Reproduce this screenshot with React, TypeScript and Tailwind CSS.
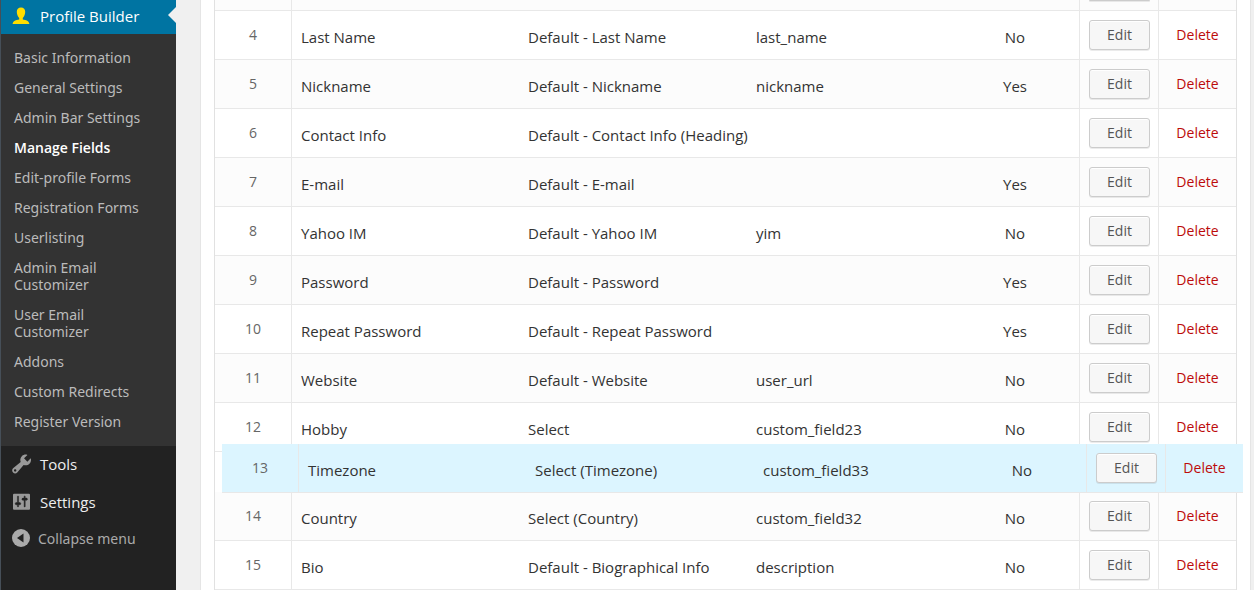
import clsx from 'clsx';

type Field = {
    id: number;
    title: string;
    type: string;
    meta?: string;
    required?: 'Yes' | 'No';
};

const submenu = [
    'Basic Information',
    'General Settings',
    'Admin Bar Settings',
    'Manage Fields',
    'Edit-profile Forms',
    'Registration Forms',
    'Userlisting',
    'Admin Email Customizer',
    'User Email Customizer',
    'Addons',
    'Custom Redirects',
    'Register Version',
];

const fieldsAbove: Field[] = [
    { id: 4, title: 'Last Name', type: 'Default - Last Name', meta: 'last_name', required: 'No' },
    { id: 5, title: 'Nickname', type: 'Default - Nickname', meta: 'nickname', required: 'Yes' },
    { id: 6, title: 'Contact Info', type: 'Default - Contact Info (Heading)' },
    { id: 7, title: 'E-mail', type: 'Default - E-mail', required: 'Yes' },
    { id: 8, title: 'Yahoo IM', type: 'Default - Yahoo IM', meta: 'yim', required: 'No' },
    { id: 9, title: 'Password', type: 'Default - Password', required: 'Yes' },
    { id: 10, title: 'Repeat Password', type: 'Default - Repeat Password', required: 'Yes' },
    { id: 11, title: 'Website', type: 'Default - Website', meta: 'user_url', required: 'No' },
    { id: 12, title: 'Hobby', type: 'Select', meta: 'custom_field23', required: 'No' },
];

const dragged: Field = { id: 13, title: 'Timezone', type: 'Select (Timezone)', meta: 'custom_field33', required: 'No' };

const fieldsBelow: Field[] = [
    { id: 14, title: 'Country', type: 'Select (Country)', meta: 'custom_field32', required: 'No' },
    { id: 15, title: 'Bio', type: 'Default - Biographical Info', meta: 'description', required: 'No' },
];

function UserIcon() {
    return (
        <svg viewBox="0 0 18 18" className="size-[18px] shrink-0 fill-[#ffde00]" aria-hidden="true">
            <path d="M9 0.5C6.3 0.5 4.8 2.2 4.8 4.8C4.8 7.4 5.8 9.6 7.2 10.9V12.6C4 13.2 1 14 0.6 17H17.4C17 14 14 13.2 10.8 12.6V10.9C12.2 9.6 13.2 7.4 13.2 4.8C13.2 2.2 11.7 0.5 9 0.5Z" />
        </svg>
    );
}

function WrenchIcon() {
    return (
        <svg viewBox="1 1.5 17 17" className="size-5 shrink-0 fill-[#999]" aria-hidden="true">
            <path d="M16.68 9.77c-1.34 1.34-3.3 1.67-4.95.99l-5.41 6.52c-.99.99-2.59.99-3.58 0s-.99-2.59 0-3.57l6.52-5.42c-.68-1.65-.35-3.61.99-4.95 1.28-1.28 3.12-1.62 4.72-1.06l-2.89 2.89 2.82 2.82 2.86-2.87c.53 1.58.18 3.39-1.08 4.65zM3.81 16.21c.4.39 1.04.39 1.43 0 .4-.4.4-1.04 0-1.43-.39-.4-1.03-.4-1.43 0-.39.39-.39 1.03 0 1.43z" />
        </svg>
    );
}

function SlidersIcon() {
    return (
        <svg viewBox="1.2 1.5 18 18" className="size-5 shrink-0" aria-hidden="true">
            <rect x="3" y="3" width="15.3" height="14.500" rx="1" fill="#999" />
            <path
                fill="#222"
                stroke="#222"
                strokeWidth="0.4"
                d="M8 11h1c.55 0 1 .45 1 1s-.45 1-1 1H8v1.5c0 .28-.22.5-.5.5s-.5-.22-.5-.5V13H6c-.55 0-1-.45-1-1s.45-1 1-1h1V5.5c0-.28.22-.5.5-.5s.5.22.5.5V11zm5-2h-1c-.55 0-1-.45-1-1s.45-1 1-1h1V5.5c0-.28.22-.5.5-.5s.5.22.5.5V7h1c.55 0 1 .45 1 1s-.45 1-1 1h-1v5.5c0 .28-.22.5-.5.5s-.5-.22-.5-.5V9z"
            />
        </svg>
    );
}

function CollapseIcon() {
    return (
        <svg viewBox="0 0 20 20" className="size-5 shrink-0" aria-hidden="true">
            <circle cx="10" cy="10" r="9" fill="#aaa" />
            <path d="M12.5 5.5v9L6 10z" fill="#222" />
        </svg>
    );
}

function Sidebar() {
    return (
        <nav className="w-[176px] shrink-0 border-l border-[#464f58] bg-[#222] text-[15px]">
            <a href="#profile-builder" className="relative flex h-[34px] items-center gap-2.5 bg-[#0074a2] pb-0.5 pl-[11px] text-white">
                <UserIcon />
                Profile Builder
                <span className="absolute top-[7px] right-0 border-y-8 border-r-8 border-y-transparent border-r-[#f0f0f0]" />
            </a>
            <ul className="bg-[#333] py-[9px] text-[14px]">
                {submenu.map((item) => (
                    <li key={item}>
                        <a
                            href="#submenu"
                            className={clsx(
                                'block pt-1.5 pr-8 pb-[7px] pl-[13px] leading-[17px]',
                                item === 'Manage Fields' ? 'font-semibold text-white' : "font-['Noto_Sans',sans-serif] text-[#bbb]",
                            )}
                        >
                            {item}
                        </a>
                    </li>
                ))}
            </ul>
            <a href="#tools" className="flex h-[38px] items-center gap-[9px] pb-0.5 pl-[10px] text-[#eee]">
                <WrenchIcon />
                Tools
            </a>
            <a href="#settings" className="flex h-[38px] items-center gap-[9px] pb-0.5 pl-[10px] text-[#eee]">
                <SlidersIcon />
                Settings
            </a>
            <button type="button" className="flex h-[34px] items-center gap-[7px] pb-0.5 pl-[10px] font-['Noto_Sans',sans-serif] text-[14px] text-[#aaa]">
                <CollapseIcon />
                Collapse menu
            </button>
        </nav>
    );
}

function Columns() {
    return (
        <colgroup>
            <col className="w-[77px]" />
            <col className="w-[227px]" />
            <col className="w-[228px]" />
            <col />
            <col className="w-[128px]" />
            <col className="w-[79px]" />
            <col className="w-[78px]" />
        </colgroup>
    );
}

function FieldRow({ field, className }: { field: Field; className: string }) {
    const cell = 'border-b border-[#e8e8e8] pt-4 pl-[9px] whitespace-nowrap';

    return (
        <tr className={clsx('h-[49px] align-top text-[15px] leading-5', className)}>
            <td className="border-r border-b border-[#e8e8e8] pt-3.5 text-center text-[14px] text-[#666]">{field.id}</td>
            <td className={cell}>{field.title}</td>
            <td className={cell}>{field.type}</td>
            <td className={cell}>{field.meta}</td>
            <td className="border-b border-[#e8e8e8] pt-4 text-center">{field.required}</td>
            <td className="border-b border-l border-[#e8e8e8] pt-[9px] pl-[9px]">
                <button
                    type="button"
                    className="block h-[30px] w-[61px] rounded-[3px] border border-[#ccc] bg-[#f7f7f7] text-[14px] leading-7 text-[#555] shadow-[inset_0_1px_0_#fff,0_1px_0_rgba(0,0,0,0.08)]"
                >
                    Edit
                </button>
            </td>
            <td className="border-b border-l border-[#e8e8e8] pt-3.5 text-center text-[14px]">
                <a href="#delete" className="text-[#bc0b0b]">Delete</a>
            </td>
        </tr>
    );
}

// foot of the row that is scrolled off above the list
function RowFoot() {
    return (
        <tr className="h-[11px] bg-[#fcfcfc] align-top" aria-hidden="true">
            <td className="border-r border-b border-[#e8e8e8]" />
            <td colSpan={4} className="border-b border-[#e8e8e8]" />
            <td className="border-b border-l border-[#e8e8e8] pl-[9px]">
                <div className="h-px w-[61px] rounded-b-[3px] bg-[#ccc] shadow-[0_1px_0_rgba(0,0,0,0.08)]" />
            </td>
            <td className="border-b border-l border-[#e8e8e8]" />
        </tr>
    );
}

export default function App() {
    return (
        <div className="flex h-screen overflow-hidden bg-[#f0f0f0] font-['Open_Sans',sans-serif] text-[#333]">
            <Sidebar />
            <main className="mr-[3px] ml-6 flex-1 border-x border-[#e5e5e5] bg-white px-[13px]">
                <table className="w-full table-fixed border-separate border-spacing-0 border-x border-[#e1e1e1]">
                    <Columns />
                    <tbody>
                        <RowFoot />
                        {fieldsAbove.map((field) => (
                            <FieldRow key={field.id} field={field} className={field.id % 2 ? 'bg-[#fcfcfc]' : 'bg-white'} />
                        ))}
                        {/* drop slot, with the dragged row floating over it */}
                        <tr className="h-10">
                            <td colSpan={7} className="relative p-0">
                                <table className="absolute -top-2 left-[7px] z-10 w-full table-fixed border-separate border-spacing-0">
                                    <Columns />
                                    <tbody>
                                        <FieldRow field={dragged} className="bg-[#dcf5ff]" />
                                    </tbody>
                                </table>
                            </td>
                        </tr>
                        {fieldsBelow.map((field) => (
                            <FieldRow key={field.id} field={field} className={field.id % 2 ? 'bg-white' : 'bg-[#fcfcfc]'} />
                        ))}
                    </tbody>
                </table>
            </main>
        </div>
    );
}
